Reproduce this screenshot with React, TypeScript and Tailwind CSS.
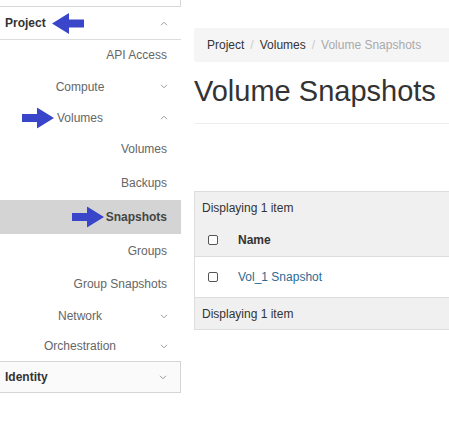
import React from 'react';

const Chevron = ({ up }: { up?: boolean }) => (
  <svg width="8" height="5" viewBox="0 0 8 5" className="text-[#9a9a9a]">
    <path
      d={up ? 'M1 4.2 L4 1.2 L7 4.2' : 'M1 0.8 L4 3.8 L7 0.8'}
      fill="none"
      stroke="currentColor"
      strokeWidth="1"
    />
  </svg>
);

const Arrow = ({ left }: { left?: boolean }) => (
  <svg width="32" height="21" viewBox="0 0 32 21" className={left ? 'rotate-180' : ''}>
    <path d="M0 6.5 H15 V0 L32 10.5 L15 21 V14.5 H0 Z" fill="#3a46c9" />
  </svg>
);

const GroupRow = ({ label, h, up, arrow }: { label: string; h: string; up?: boolean; arrow?: boolean }) => (
  <div className={`flex items-center ${h}`}>
    <div className="relative flex w-[160px] justify-center text-[12px] text-[#666]">
      {arrow && (
        <span className="absolute left-[22px] top-1/2 -translate-y-1/2">
          <Arrow />
        </span>
      )}
      {label}
    </div>
    <Chevron up={up} />
  </div>
);

const SubRow = ({ label, h, active }: { label: string; h: string; active?: boolean }) => (
  <div
    className={`relative flex items-center justify-end pr-[14px] text-[12px] ${h} ${
      active ? 'bg-[#d4d4d4] font-bold text-[#444]' : 'text-[#666]'
    }`}
  >
    {active && (
      <span className="absolute left-[72px] top-1/2 -translate-y-1/2">
        <Arrow />
      </span>
    )}
    {label}
  </div>
);

const Checkbox = () => (
  <span className="inline-block h-[10px] w-[10px] rounded-[2px] border border-[#555] bg-white" />
);

export default function App() {
  return (
    <div className="flex h-[439px] w-[449px] overflow-hidden bg-white font-['Liberation_Sans',Arial,sans-serif]">
      {/* side navigation */}
      <div className="w-[181px] shrink-0">
        <div className="h-[7px] border-b border-r border-[#d8d8d8]" />
        <div className="flex h-[33px] items-center border-b border-[#ddd] pl-[5px]">
          <span className="text-[12px] font-bold text-[#333]">Project</span>
          <span className="ml-[6px]">
            <Arrow left />
          </span>
          <span className="ml-auto mr-[13px]">
            <Chevron up />
          </span>
        </div>
        <SubRow label="API Access" h="h-[30px]" />
        <GroupRow label="Compute" h="h-[33px]" />
        <GroupRow label="Volumes" h="h-[29px]" up arrow />
        <SubRow label="Volumes" h="h-[34px]" />
        <SubRow label="Backups" h="h-[34px]" />
        <SubRow label="Snapshots" h="h-[34px]" active />
        <SubRow label="Groups" h="h-[33px]" />
        <SubRow label="Group Snapshots" h="h-[34px]" />
        <GroupRow label="Network" h="h-[30px]" />
        <GroupRow label="Orchestration" h="h-[30px]" />
        <div className="flex h-[32px] items-center border border-l-0 border-[#d4d4d4] bg-[#fafafa] pl-[5px]">
          <span className="text-[12px] font-bold text-[#333]">Identity</span>
          <span className="ml-auto mr-[13px]">
            <Chevron />
          </span>
        </div>
      </div>

      {/* page content */}
      <div className="ml-[13px] min-w-0 flex-1">
        <div className="mt-[28px] flex h-[34px] items-center rounded-l-[3px] bg-[#f5f5f5] pl-[13px] text-[12px] text-[#333]">
          <span>Project</span>
          <span className="px-[6px] text-[#ccc]">/</span>
          <span>Volumes</span>
          <span className="px-[6px] text-[#ccc]">/</span>
          <span className="text-[#aaa]">Volume Snapshots</span>
        </div>
        <h1 className="mt-[11px] text-[29px] leading-[36px] text-[#333]">Volume Snapshots</h1>
        <div className="mt-[14px] border-t border-[#eee]" />

        <div className="mt-[67px] border border-r-0 border-[#ddd] text-[12px] text-[#333]">
          <div className="flex h-[31px] items-center bg-[#f0f0f0] pl-[7px]">Displaying 1 item</div>
          <div className="flex h-[33px] items-center gap-[20px] bg-[#f0f0f0] pl-[13px]">
            <Checkbox />
            <span className="font-bold">Name</span>
          </div>
          <div className="flex h-[41px] items-center gap-[20px] border-t border-[#ddd] bg-white pl-[13px]">
            <Checkbox />
            <span className="text-[#2c6b93]">Vol_1 Snapshot</span>
          </div>
          <div className="flex h-[32px] items-center border-t border-[#ddd] bg-[#f0f0f0] pl-[7px]">
            Displaying 1 item
          </div>
        </div>
      </div>
    </div>
  );
}
